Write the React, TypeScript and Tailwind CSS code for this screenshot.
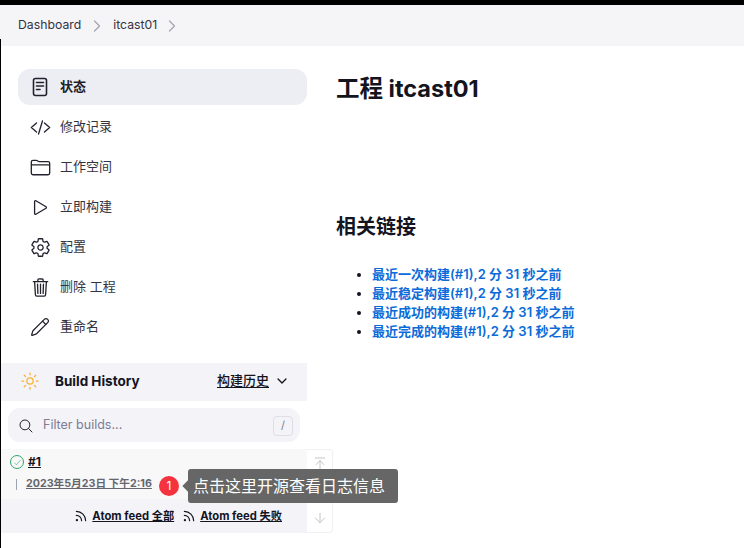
import { FC, ReactNode } from "react";
import { ArrowDown, ArrowUpToLine, ChevronRight, Pencil, Rss } from "lucide-react";
import {
  IoChevronDown,
  IoCheckmark,
  IoCodeSlashOutline,
  IoFolderOutline,
  IoPlayOutline,
  IoSearchOutline,
  IoSettingsOutline,
  IoSunnyOutline,
  IoTrashOutline,
} from "react-icons/io5";

type NavItemProps = {
  icon: ReactNode;
  label: string;
  active?: boolean;
};

const NavItem: FC<NavItemProps> = ({ icon, label, active }) => {
  return (
    <div className={active ? "flex h-9 items-center rounded-xl bg-[#edeef3] pl-[12px] text-[13px] font-bold text-[#1e1e2a]" : "flex h-9 items-center pl-[12px] text-[13px] text-[#33333f]"}>
      <span className="flex w-[20px] justify-center">{icon}</span>
      <span className="ml-[10px]">{label}</span>
    </div>
  );
};

const iconClass = "h-[21px] w-[21px] shrink-0 text-[#22222e]";

const DocIcon = () => (
  <svg viewBox="0 0 20 20" fill="none" stroke="currentColor" strokeWidth="1.6" strokeLinecap="round" className="h-5 w-5 text-[#22222e]">
    <rect x="3.5" y="1.5" width="13" height="17" rx="2" />
    <path d="M6.5 5.5h7M6.5 9h7M6.5 12.5h3.5" />
  </svg>
);

export default function App() {
  return (
    <div className="relative flex h-[548px] w-[744px] flex-col overflow-hidden bg-white font-['Inter','Noto_Sans_CJK_SC',sans-serif] text-[#14141f]">
      <div className="h-[5px] bg-black" />
      <div className="flex h-[41px] items-center bg-[#f5f5f8] pl-[18px] text-[12.25px] text-[#33333f]">
        <span>Dashboard</span>
        <ChevronRight className="ml-[6px] h-5 w-5 text-[#a5a5b0]" strokeWidth={1.5} />
        <span className="ml-[6px]">itcast01</span>
        <ChevronRight className="ml-[5px] h-5 w-5 text-[#a5a5b0]" strokeWidth={1.5} />
      </div>
      <div className="flex flex-1">
        <div className="w-[307px] pl-px">
          <div className="flex flex-col gap-1 pl-[17px] pt-[23px]">
            <NavItem active icon={<DocIcon />} label="状态" />
            <NavItem icon={<IoCodeSlashOutline className={iconClass} />} label="修改记录" />
            <NavItem icon={<IoFolderOutline className={iconClass} />} label="工作空间" />
            <NavItem icon={<IoPlayOutline className={iconClass} />} label="立即构建" />
            <NavItem icon={<IoSettingsOutline className={iconClass} />} label="配置" />
            <NavItem icon={<IoTrashOutline className={iconClass} />} label="删除 工程" />
            <NavItem icon={<Pencil className="h-5 w-5 text-[#22222e]" strokeWidth={1.5} />} label="重命名" />
          </div>
          <div className="mt-[18px] flex h-[38px] items-center bg-[#f3f3f8] pb-[2px] pl-[19px] pr-[18px]">
            <IoSunnyOutline className="h-5 w-5 text-[#f9b233]" />
            <span className="ml-[15px] text-[13.5px] font-bold">Build History</span>
            <span className="ml-auto text-[13px] font-medium underline underline-offset-2">构建历史</span>
            <IoChevronDown className="ml-[6px] h-[14px] w-[14px]" />
          </div>
          <div className="ml-[7px] mt-[7px] flex h-[34px] w-[292px] items-center rounded-xl bg-[#f3f3f8] pl-[10px] pr-[7px] pt-px text-[12.5px] text-[#7d7d95]">
            <IoSearchOutline className="h-4 w-4 text-[#22222e]" />
            <span className="ml-[9px]">Filter builds...</span>
            <span className="ml-auto flex h-5 w-5 items-center justify-center rounded border border-[#dedee8] text-[11px]">/</span>
          </div>
          <div className="mt-[7px] h-[50px] bg-[#f8f8f8] pl-[9px] pt-[6px]">
            <div className="flex h-[14px] items-center">
              <span className="flex h-[14px] w-[14px] items-center justify-center rounded-full border border-[#30a46c]">
                <IoCheckmark className="h-[9px] w-[9px] text-[#30a46c]" />
              </span>
              <span className="ml-[4px] text-[12px] font-bold underline">#1</span>
            </div>
            <div className="mt-[7px] flex items-center">
              <span className="ml-[6px] h-[11px] w-px bg-[#9aa5b1]" />
              <span className="ml-[9px] text-[10.7px] font-bold text-[#66666f] underline">2023年5月23日 下午2:16</span>
            </div>
          </div>
          <div className="flex h-[34px] items-center justify-end gap-[8px] bg-[#f3f3f8] pr-[25px] text-[11.25px] font-bold">
            <span className="flex items-center gap-[4px]">
              <Rss className="h-[14px] w-[14px]" strokeWidth={2} />
              <span className="underline">Atom feed 全部</span>
            </span>
            <span className="flex items-center gap-[4px]">
              <Rss className="h-[14px] w-[14px]" strokeWidth={2} />
              <span className="underline">Atom feed 失败</span>
            </span>
          </div>
        </div>
        <div className="flex-1 pl-[29px] pt-[27px]">
          <h1 className="text-[23.5px] leading-[32px] font-bold text-[#14141f]">工程 itcast01</h1>
          <h2 className="mt-[108px] text-[20px] leading-[28px] font-bold text-[#14141f]">相关链接</h2>
          <ul className="ml-[36px] mt-[24px] list-disc text-[13px] leading-[19px] font-semibold text-[#0b6bd8] marker:text-[#14141f]">
            <li>最近一次构建(#1),2 分 31 秒之前</li>
            <li>最近稳定构建(#1),2 分 31 秒之前</li>
            <li>最近成功的构建(#1),2 分 31 秒之前</li>
            <li>最近完成的构建(#1),2 分 31 秒之前</li>
          </ul>
        </div>
      </div>
      {/* black edge of the capture */}
      <div className="absolute bottom-0 left-0 top-[39px] w-px bg-black" />
      {/* scroll buttons next to the build list */}
      <div className="absolute left-[307px] top-[449px] flex h-[84px] w-[26px] flex-col items-center justify-between rounded-r border border-l-0 border-[#f0f0f3] bg-white py-[6px] text-[#c4c4c8]">
        <ArrowUpToLine className="h-4 w-4" strokeWidth={1.5} />
        <ArrowDown className="h-4 w-4" strokeWidth={1.5} />
      </div>
      {/* guide overlay */}
      <div className="absolute left-[159px] top-[476px] flex h-5 w-5 items-center justify-center rounded-full bg-[#f5333f] text-[12px] text-white">1</div>
      <div className="absolute left-[188px] top-[469px] flex h-[34px] w-[210px] items-center rounded-[3px] bg-[#666666] pl-[5px] text-[16px] whitespace-nowrap text-white">
        点击这里开源查看日志信息
        <span className="absolute left-[-4px] top-[13px] h-2 w-2 rotate-45 bg-[#666666]" />
      </div>
    </div>
  );
}
